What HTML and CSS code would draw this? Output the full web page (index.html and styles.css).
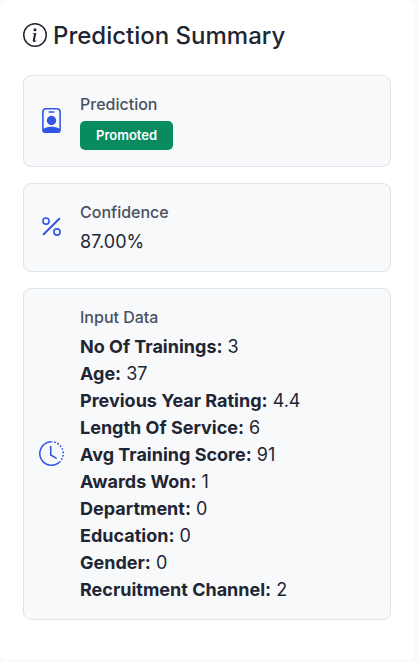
FILE: index.html
```html
<!DOCTYPE html>
<html lang="en">
<head>
<meta charset="utf-8">
<meta name="viewport" content="width=device-width, initial-scale=1">
<title>Prediction Summary</title>
<link rel="stylesheet" href="styles.css">
</head>
<body>
<main class="panel">
  <h1 class="title">
    <svg class="title-icon" viewBox="0 0 16 16" aria-hidden="true"><path d="M8 15A7 7 0 1 1 8 1a7 7 0 0 1 0 14m0 1A8 8 0 1 0 8 0a8 8 0 0 0 0 16"/><path d="m8.93 6.588-2.29.287-.082.38.45.083c.294.07.352.176.288.469l-.738 3.468c-.194.897.105 1.319.808 1.319.545 0 1.178-.252 1.465-.598l.088-.416c-.2.176-.492.246-.686.246-.275 0-.375-.193-.304-.533zM9 4.5a1 1 0 1 1-2 0 1 1 0 0 1 2 0"/></svg>
    Prediction Summary
  </h1>
  <div class="cards">
    <section class="card">
      <svg class="icon" viewBox="0 0 16 16" aria-hidden="true"><path d="M6.5 2a.5.5 0 0 0 0 1h3a.5.5 0 0 0 0-1zM11 8a3 3 0 1 1-6 0 3 3 0 0 1 6 0"/><path d="M4.5 0A2.5 2.5 0 0 0 2 2.5V14a2 2 0 0 0 2 2h8a2 2 0 0 0 2-2V2.5A2.5 2.5 0 0 0 11.5 0zM3 2.5A1.5 1.5 0 0 1 4.5 1h7A1.5 1.5 0 0 1 13 2.5v10.795a4.2 4.2 0 0 0-.776-.492C11.392 12.387 10.063 12 8 12s-3.392.387-4.224.803a4.2 4.2 0 0 0-.776.492z"/></svg>
      <div class="content">
        <h2 class="label">Prediction</h2>
        <div class="status"><span class="badge">Promoted</span></div>
      </div>
    </section>
    <section class="card">
      <svg class="icon" viewBox="0 0 16 16" aria-hidden="true"><path d="M13.442 2.558a.625.625 0 0 1 0 .884l-10 10a.625.625 0 1 1-.884-.884l10-10a.625.625 0 0 1 .884 0M4.5 6a1.5 1.5 0 1 1 0-3 1.5 1.5 0 0 1 0 3m0 1a2.5 2.5 0 1 0 0-5 2.5 2.5 0 0 0 0 5m7 6a1.5 1.5 0 1 1 0-3 1.5 1.5 0 0 1 0 3m0 1a2.5 2.5 0 1 0 0-5 2.5 2.5 0 0 0 0 5"/></svg>
      <div class="content">
        <h2 class="label">Confidence</h2>
        <p class="value">87.00%</p>
      </div>
    </section>
    <section class="card">
      <svg class="icon" viewBox="0 0 16 16" aria-hidden="true"><path d="M8.515 1.019A7 7 0 0 0 8 1V0a8 8 0 0 1 .589.022zm2.004.45a7 7 0 0 0-.985-.299l.219-.976q.576.129 1.126.342zm1.37.71a7 7 0 0 0-.439-.27l.493-.87a8 8 0 0 1 .979.654l-.615.789a7 7 0 0 0-.418-.302zm1.834 1.79a7 7 0 0 0-.653-.796l.724-.69q.406.429.747.91zm.744 1.352a7 7 0 0 0-.214-.468l.893-.45a8 8 0 0 1 .45 1.088l-.95.313a7 7 0 0 0-.179-.483m.53 2.507a7 7 0 0 0-.1-1.025l.985-.17q.1.58.116 1.17zm-.131 1.538q.05-.254.081-.51l.993.123a8 8 0 0 1-.23 1.155l-.964-.267q.069-.247.12-.501m-.952 2.379q.276-.436.486-.908l.914.405q-.24.54-.555 1.038zm-.964 1.205q.183-.183.35-.378l.758.653a8 8 0 0 1-.401.432z"/><path d="M8 1a7 7 0 1 0 4.95 11.95l.707.707A8.001 8.001 0 1 1 8 0z"/><path d="M7.5 3a.5.5 0 0 1 .5.5v5.21l3.248 1.856a.5.5 0 0 1-.496.868l-3.5-2A.5.5 0 0 1 7 9V3.5a.5.5 0 0 1 .5-.5"/></svg>
      <div class="content">
        <h2 class="label">Input Data</h2>
        <ul class="value list">
          <li><strong>No Of Trainings:</strong> 3</li>
          <li><strong>Age:</strong> 37</li>
          <li><strong>Previous Year Rating:</strong> 4.4</li>
          <li><strong>Length Of Service:</strong> 6</li>
          <li><strong>Avg Training Score:</strong> 91</li>
          <li><strong>Awards Won:</strong> 1</li>
          <li><strong>Department:</strong> 0</li>
          <li><strong>Education:</strong> 0</li>
          <li><strong>Gender:</strong> 0</li>
          <li><strong>Recruitment Channel:</strong> 2</li>
        </ul>
      </div>
    </section>
  </div>
</main>
</body>
</html>
```
FILE: styles.css
```css
* {
  box-sizing: border-box;
  margin: 0;
  padding: 0;
}

body {
  padding-right: 4px;
  background: #f9fafb;
  color: #1f2633;
  font-family: Inter, "Liberation Sans", sans-serif;
}

.panel {
  padding: 21px 24px 40px 23px;
  border-radius: 8px;
  background: #fff;
}

.title {
  display: flex;
  align-items: center;
  gap: 6px;
  margin-bottom: 24px;
  font-size: 24px;
  font-weight: 500;
  line-height: 30px;
}

.title-icon {
  width: 24px;
  height: 24px;
  margin-bottom: 2px;
  fill: currentColor;
}

.cards {
  display: grid;
  gap: 16px;
}

.card {
  display: flex;
  align-items: center;
  gap: 16px;
  padding: 16px 15px;
  border: 1px solid #e1e3ea;
  border-radius: 8px;
  background: #f8f9fb;
}

.icon {
  flex: none;
  width: 25px;
  height: 25px;
  margin-bottom: 2px;
  fill: #3454e4;
}

.label {
  margin-bottom: 4px;
  color: #48515f;
  font-size: 16px;
  font-weight: 500;
  line-height: 24px;
}

.value {
  font-size: 18px;
  line-height: 27px;
}

.list {
  list-style: none;
}

.status {
  display: flex;
  padding-top: 1px;
}

.badge {
  padding: 4px 16px 5px;
  border-radius: 5px;
  background: #078b5f;
  color: #fff;
  font-size: 13px;
  font-weight: 600;
  line-height: 20px;
}
```
